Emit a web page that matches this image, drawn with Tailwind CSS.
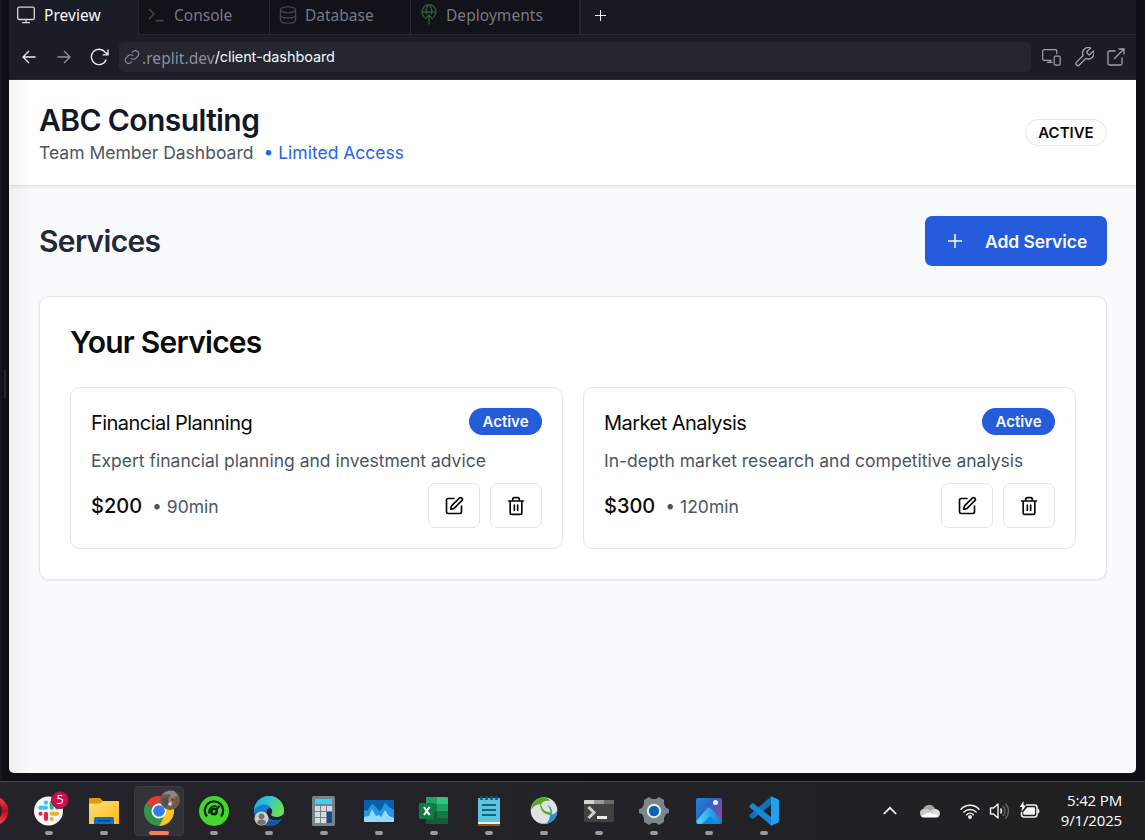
<!DOCTYPE html>
<html lang="en">
<head>
<meta charset="utf-8">
<title>ABC Consulting</title>
<script src="https://cdn.jsdelivr.net/npm/@tailwindcss/browser@4"></script>
</head>
<body class="w-[1145px] h-[840px] overflow-hidden bg-[#0e0e15] flex flex-col font-['Inter',sans-serif]">

<div class="flex h-[781px] shrink-0">
  <!-- left gutter with resize handle -->
  <div class="w-[9px] shrink-0 flex items-center justify-end pr-[3px] pb-[14px] border-l-2 border-[#171720]"><div class="w-[2px] h-[30px] bg-[#25252e]"></div></div>

  <div class="w-[1127px] h-[773px] shrink-0 flex flex-col bg-[#1b1d26]">
    <!-- tabs -->
    <div class="flex h-[35px] shrink-0 font-['Noto_Sans',sans-serif] text-[15.5px] text-[#777a83]">
      <div class="w-[129px] flex items-start pl-[8px] text-[#f5f7fa]">
        <svg class="mt-[6px] w-[18px] h-[18px]" viewBox="0 0 18 18" fill="none" stroke="#d5d8df" stroke-width="1.3"><rect x=".7" y="1.2" width="16.6" height="12.3" rx="1.5"/><path d="M9 13.5v3M5 16.6h8"/></svg>
        <span class="ml-[9px] mt-[3px] leading-[24px] tracking-[0.050px]">Preview</span>
      </div>
      <div class="w-[132px] flex items-start bg-[#11121a] border-x border-b border-[#242630] pl-[9px]">
        <svg class="mt-[8px] w-[16px] h-[14px]" viewBox="0 0 16 14" fill="none" stroke="#4d4739" stroke-width="1.4"><path d="M1 1l5 5-5 5M7.5 12.8h8"/></svg>
        <span class="ml-[10px] mt-[3px] leading-[24px]">Console</span>
      </div>
      <div class="w-[141px] flex items-start bg-[#11121a] border-r border-b border-[#242630] pl-[9px]">
        <svg class="mt-[6px] w-[18px] h-[18px]" viewBox="0 0 18 18" fill="none" stroke="#394757" stroke-width="1.3"><ellipse cx="9" cy="3.8" rx="7.6" ry="3"/><path d="M1.4 3.8v10.4c0 1.7 3.4 3 7.6 3s7.6-1.3 7.6-3V3.8M1.4 9c0 1.7 3.4 3 7.6 3s7.6-1.3 7.6-3"/></svg>
        <span class="ml-[8px] mt-[3px] leading-[24px]">Database</span>
      </div>
      <div class="w-[170px] flex items-start bg-[#11121a] border-r-2 border-b border-[#242630] pl-[10px]">
        <svg class="mt-[4px] w-[16px] h-[21px]" viewBox="0 0 16 21" fill="none" stroke="#2c5b39" stroke-width="1.4"><path d="M3.600 13.200a7 7 0 1 1 8.800 0M1 8h14M5.600 10.200C4.400 5.800 6 2.300 8 1.200c2 1.100 3.600 4.600 2.400 9M8 20.500V11M4 15l4-4 4 4"/></svg>
        <span class="ml-[9px] mt-[3px] leading-[24px] tracking-[0.050px]">Deployments</span>
      </div>
      <div class="flex-1 bg-[#181820] border-b border-[#292b34] pl-[14px] pt-[10px]">
        <svg class="w-[11px] h-[11px]" viewBox="0 0 11 11" stroke="#f2f4f7" stroke-width="1"><path d="M5.500 0v11M0 5.500h11"/></svg>
      </div>
    </div>

    <!-- address bar -->
    <div class="flex items-center h-[45px] shrink-0 border-b border-[#2a2c36] pl-[13px] pr-[11px]">
      <svg class="w-[14px] h-[14px]" viewBox="0 0 14 14" fill="none" stroke="#eceef2" stroke-width="1.3"><path d="M13.500 7H1M7 1L1 7l6 6"/></svg>
      <svg class="ml-[21px] w-[14px] h-[14px]" viewBox="0 0 14 14" fill="none" stroke="#8f929c" stroke-width="1.3"><path d="M.5 7H13M7 1l6 6-6 6"/></svg>
      <svg class="ml-[19px] w-[19px] h-[18px]" viewBox="0 0 19 18" fill="none" stroke="#eceef2" stroke-width="1.400"><path d="M16.300 11.500A7.700 7.700 0 1 1 15 4L18 6.800M18 1.500v5.400h-5.400"/></svg>
      <div class="ml-[10px] w-[912px] h-[30px] rounded-[5px] bg-[#242730] flex items-center pl-[5px] text-[#8b8f9a] font-['Noto_Sans',sans-serif] text-[15.500px]">
        <svg class="w-[16px] h-[16px] shrink-0" viewBox="0 0 24 24" fill="none" stroke="#8b8f9a" stroke-width="1.700"><path d="M10 13.500a5 5 0 0 0 7.500.5l3.500-3.500a5 5 0 0 0-7-7l-2 2M14 10.500a5 5 0 0 0-7.500-.5L3 13.500a5 5 0 0 0 7 7l2-2"/></svg>
        <span class="ml-[2px] mt-[2px] leading-[20px] tracking-[0.050px]">.replit.dev</span><span class="-mt-px leading-[20px] tracking-[-0.100px] text-[#f5f7fa] font-['Inter',sans-serif] text-[14.500px]">/client-dashboard</span>
      </div>
      <svg class="ml-[11px] w-[19px] h-[17px]" viewBox="0 0 19 17" fill="none" stroke="#a1a4ad" stroke-width="1.200"><path d="M9.500 11.300H2.200A1.500 1.500 0 0 1 .7 9.800V2.200A1.500 1.500 0 0 1 2.200.7h11.100a1.500 1.500 0 0 1 1.500 1.500v3M8 11.300v2M5 13.400h5.500"/><rect x="12.200" y="7.200" width="6" height="9" rx="1.200"/></svg>
      <svg class="ml-[14px] w-[19px] h-[20px]" viewBox="2 2 20 20" fill="none" stroke="#a1a4ad" stroke-width="1.400" stroke-linejoin="round"><path d="M14.700 6.300a1 1 0 0 0 0 1.400l1.600 1.600a1 1 0 0 0 1.400 0l3.770-3.770a6 6 0 0 1-7.940 7.940l-6.910 6.910a2.120 2.120 0 0 1-3-3l6.910-6.910a6 6 0 0 1 7.940-7.940z"/></svg>
      <svg class="ml-[13px] w-[18px] h-[18px]" viewBox="0 0 18 18" fill="none" stroke="#a1a4ad" stroke-width="1.300"><path d="M8.500 3H2.500A1.500 1.500 0 0 0 1 4.500v11A1.500 1.500 0 0 0 2.500 17h11a1.500 1.500 0 0 0 1.500-1.500v-6M11.500 1H17v5.500M17 1L7 11"/></svg>
    </div>

    <!-- previewed page -->
    <div class="relative h-[693px] shrink-0 bg-[#f9fafc] rounded-b-[5px] overflow-hidden">
      <div class="flex h-[106px] items-center justify-between bg-white border-b border-[#e2e4e7] pl-[30px] pr-[29px] shadow-[0_1px_3px_rgba(0,0,0,0.08)]">
        <div class="h-[60px] -mt-[6px]">
          <h1 class="text-[30px] leading-[40px] font-semibold tracking-[-0.600px] text-[#111827]">ABC Consulting</h1>
          <p class="text-[17.500px] leading-[25px] text-[#4b5563]"><span>Team Member Dashboard</span><span class="ml-[10px] text-[#2563eb]">• Limited Access</span></p>
        </div>
        <span class="w-[82px] h-[27px] rounded-full border border-[#e5e5e5] text-[15px] leading-[25px] text-center font-semibold text-[#0a0a0a]">ACTIVE</span>
      </div>

      <div class="pl-[30px] pr-[29px] pt-[30px]">
        <div class="flex items-center justify-between h-[50px]">
          <h2 class="text-[30px] leading-[40px] font-semibold tracking-[-0.680px] text-[#1f2937]">Services</h2>
          <button class="w-[182px] h-[50px] rounded-[7px] bg-[#255cdb] text-[#f8fafc] flex items-center pl-[23px] text-[17.500px] font-semibold">
            <svg class="w-[14px] h-[14px]" viewBox="0 0 14 14" stroke="currentColor" stroke-width="1.500"><path d="M7 0v14M0 7h14"/></svg>
            <span class="ml-[23px] mt-[2px] tracking-[-0.080px] whitespace-nowrap">Add Service</span>
          </button>
        </div>

        <section class="mt-[30px] h-[284px] rounded-[10px] border border-[#e5e5e5] bg-white px-[30px] pt-[25px] shadow-[0_1px_2px_rgba(0,0,0,0.06)]">
          <h3 class="text-[30px] leading-[40px] font-semibold tracking-[-0.750px] text-[#0a0a0a]">Your Services</h3>
          <div class="mt-[25px] grid grid-cols-2 gap-[20px]">
            <article class="h-[162px] rounded-[10px] border border-[#e5e5e5] px-[20px] pt-[20px]">
              <div class="flex justify-between">
                <h4 class="text-[20px] leading-[30px] tracking-[-0.540px] text-[#0a0a0a]">Financial Planning</h4>
                <span class="w-[73px] h-[27px] rounded-full bg-[#255cdb] text-[#f8fafc] text-[15px] leading-[27px] text-center font-semibold">Active</span>
              </div>
              <p class="mt-[10px] text-[17.500px] leading-[25px] text-[#4b5563]">Expert financial planning and investment advice</p>
              <div class="mt-[10px] flex items-center h-[45px]">
                <span class="text-[20px] font-medium text-[#0a0a0a]">$200</span>
                <span class="ml-[10px] mt-[3px] text-[17.500px] text-[#4b5563]">• 90min</span>
                <button class="ml-auto w-[52px] h-[45px] rounded-[7px] border border-[#e5e5e5] grid place-items-center">
                  <svg class="w-[20px] h-[20px]" viewBox="0 0 24 24" fill="none" stroke="#0a0a0a" stroke-width="2" stroke-linecap="round" stroke-linejoin="round"><path d="M12 3H5a2 2 0 0 0-2 2v14a2 2 0 0 0 2 2h14a2 2 0 0 0 2-2v-7"/><path d="M18.375 2.625a1 1 0 0 1 3 3l-9.013 9.014a2 2 0 0 1-.853.505l-2.873.84a.5.5 0 0 1-.62-.62l.84-2.873a2 2 0 0 1 .506-.852z"/></svg>
                </button>
                <button class="ml-[10px] w-[52px] h-[45px] rounded-[7px] border border-[#e5e5e5] grid place-items-center">
                  <svg class="w-[20px] h-[20px]" viewBox="0 0 24 24" fill="none" stroke="#0a0a0a" stroke-width="2" stroke-linecap="round" stroke-linejoin="round"><path d="M3 6h18M19 6v14a2 2 0 0 1-2 2H7a2 2 0 0 1-2-2V6M8 6V4a2 2 0 0 1 2-2h4a2 2 0 0 1 2 2v2M10 11v6M14 11v6"/></svg>
                </button>
              </div>
            </article>
            <article class="h-[162px] rounded-[10px] border border-[#e5e5e5] px-[20px] pt-[20px]">
              <div class="flex justify-between">
                <h4 class="text-[20px] leading-[30px] tracking-[-0.540px] text-[#0a0a0a]">Market Analysis</h4>
                <span class="w-[73px] h-[27px] rounded-full bg-[#255cdb] text-[#f8fafc] text-[15px] leading-[27px] text-center font-semibold">Active</span>
              </div>
              <p class="mt-[10px] text-[17.500px] leading-[25px] text-[#4b5563]">In-depth market research and competitive analysis</p>
              <div class="mt-[10px] flex items-center h-[45px]">
                <span class="text-[20px] font-medium text-[#0a0a0a]">$300</span>
                <span class="ml-[10px] mt-[3px] text-[17.500px] text-[#4b5563]">• 120min</span>
                <button class="ml-auto w-[52px] h-[45px] rounded-[7px] border border-[#e5e5e5] grid place-items-center">
                  <svg class="w-[20px] h-[20px]" viewBox="0 0 24 24" fill="none" stroke="#0a0a0a" stroke-width="2" stroke-linecap="round" stroke-linejoin="round"><path d="M12 3H5a2 2 0 0 0-2 2v14a2 2 0 0 0 2 2h14a2 2 0 0 0 2-2v-7"/><path d="M18.375 2.625a1 1 0 0 1 3 3l-9.013 9.014a2 2 0 0 1-.853.505l-2.873.84a.5.5 0 0 1-.62-.62l.84-2.873a2 2 0 0 1 .506-.852z"/></svg>
                </button>
                <button class="ml-[10px] w-[52px] h-[45px] rounded-[7px] border border-[#e5e5e5] grid place-items-center">
                  <svg class="w-[20px] h-[20px]" viewBox="0 0 24 24" fill="none" stroke="#0a0a0a" stroke-width="2" stroke-linecap="round" stroke-linejoin="round"><path d="M3 6h18M19 6v14a2 2 0 0 1-2 2H7a2 2 0 0 1-2-2V6M8 6V4a2 2 0 0 1 2-2h4a2 2 0 0 1 2 2v2M10 11v6M14 11v6"/></svg>
                </button>
              </div>
            </article>
          </div>
        </section>
      </div>
      <div class="absolute inset-y-0 left-0 w-[24px] bg-linear-to-r from-black/4 to-transparent"></div>
    </div>
  </div>
</div>

<!-- taskbar -->
<div class="flex h-[59px] shrink-0 border-t border-[#45454a] bg-linear-to-r from-[#24232b] via-[#232227] to-[#202020]">
  <div class="flex -ml-[33.500px] shrink-0">
    <div class="w-[55px] pt-[14px] flex flex-col items-center">
      <svg class="w-[30px] h-[30px]" viewBox="0 0 30 30"><defs><linearGradient id="op" x2="0" y2="1"><stop stop-color="#f04a50"/><stop offset=".5" stop-color="#b50d18"/><stop offset="1" stop-color="#ff4b4b"/></linearGradient></defs><circle cx="15" cy="15" r="14.300" fill="url(#op)"/><ellipse cx="15" cy="15" rx="8" ry="9.500" fill="#24232b"/></svg>
    </div>
    <div class="relative w-[55px] pt-[14px] flex flex-col items-center">
      <svg class="w-[30px] h-[30px]" viewBox="0 0 30 30"><circle cx="14.500" cy="15" r="14.500" fill="#f7f7f7"/><g stroke-width="4" stroke-linecap="round"><path d="M12 6.600v.1M6.300 11.800H12" stroke="#36c5f0"/><path d="M17.700 6.500v5.300M23 11.800h.1" stroke="#2eb67d"/><path d="M17.700 17.800H23M17.700 23v.1" stroke="#ecb22e"/><path d="M12 17.800V23M6.500 17.800h.1" stroke="#e01e5a"/></g></svg>
      <span class="absolute left-[29.500px] top-[9px] w-[18px] h-[18px] rounded-full bg-[#c9124c] border border-[#7e1236] text-white text-[12.500px] leading-[16px] text-center font-['Open_Sans',sans-serif]">5</span>
      <i class="mt-[5px] w-[8px] h-[4px] rounded-full bg-[#99999c]"></i>
    </div>
    <div class="w-[55px] pt-[14px] flex flex-col items-center">
      <svg class="w-[30px] h-[30px]" viewBox="0 0 30 30"><defs><linearGradient id="fo" x2="1" y2="1"><stop stop-color="#ffe07a"/><stop offset="1" stop-color="#fbb916"/></linearGradient></defs><path d="M0 3q0-1 1-1h10l3 3v6H0z" fill="#dc9d08"/><path d="M0 7.500h10.500L14 5h16v23H0z" fill="url(#fo)"/><path d="M5 28v-5.500q0-1.500 1.500-1.500h17q1.500 0 1.500 1.500V28z" fill="#0b71c3"/><path d="M8.500 24.700h13" stroke="#07447e" stroke-width="1.200"/></svg>
      <i class="mt-[5px] w-[8px] h-[4px] rounded-full bg-[#99999c]"></i>
    </div>
    <div class="w-[55px] pt-[4px] flex flex-col items-center">
      <div class="relative w-[50px] h-[50px] rounded-[4px] bg-[#333239] border border-[#3b3a41] pt-[9px] flex flex-col items-center">
        <svg class="w-[30px] h-[30px]" viewBox="0 0 30 30"><path d="M15 15L2 7.500A15 15 0 0 1 28 7.500z" fill="#e53b30"/><path d="M15 15L2 7.500A15 15 0 0 0 15 30l7-11z" fill="#31964b"/><path d="M15 7.500h13A15 15 0 0 1 15 30l7-13z" fill="#fbc420"/><circle cx="15" cy="15" r="7.500" fill="#fff"/><circle cx="15" cy="15" r="5.800" fill="#347ce8"/></svg>
        <svg class="absolute left-[25px] top-[3px] w-[20px] h-[20px]" viewBox="0 0 20 20"><circle cx="10" cy="10" r="10" fill="#6f5b50"/><path d="M2 5Q8 0 14 1l4 5-5 1-4-3z" fill="#7e8d95"/><path d="M11 4l4 3-2 6-3 2-2-5z" fill="#a87a62"/><path d="M2 9l6-2 1 7-4 3z" fill="#49505a"/><path d="M9 12l3 1-1 3-3-1z" fill="#d8cfc9"/><path d="M11 8l3 1-1 3z" fill="#4b2e28"/></svg>
        <i class="mt-[5px] w-[20px] h-[4px] rounded-full bg-[#f0805f]"></i>
      </div>
    </div>
    <div class="w-[55px] pt-[14px] flex flex-col items-center">
      <svg class="w-[30px] h-[30px]" viewBox="0 0 30 30" fill="none" stroke="#08240b"><circle cx="15" cy="15" r="15" fill="#44d62c" stroke="none"/><path d="M8 20.500a9.200 9.200 0 1 1 14 0" stroke-width="2.200"/><path d="M10.300 17.500a5.600 5.600 0 0 1 7.500-7" stroke-width="1.600"/><circle cx="15" cy="15.500" r="2.700" stroke-width="2.600"/><path d="M16.500 14l4-4" stroke-width="2.200"/></svg>
      <i class="mt-[5px] w-[8px] h-[4px] rounded-full bg-[#99999c]"></i>
    </div>
    <div class="w-[55px] pt-[14px] flex flex-col items-center">
      <svg class="w-[30px] h-[30px]" viewBox="0 0 30 30"><defs><linearGradient id="e1" x2="1" y2=".4"><stop stop-color="#239fe0"/><stop offset=".5" stop-color="#35c2d4"/><stop offset="1" stop-color="#6de04d"/></linearGradient></defs><circle cx="15" cy="15" r="15" fill="#127fd6"/><path d="M11 16c-1 7 6 12 17 7-4 6-9 8-14 7-5-3-6-9-3-14z" fill="#1557a0"/><path d="M0 14.500A15 15 0 0 1 30 15c0 4-3 6-7 6-3 0-6-1-6-2 0-1 2-2 1-5C16 7 5 6 0 14.500z" fill="url(#e1)"/><path d="M12.500 16q0-4 4-4c2 2 2 4 .5 6.500 0 2 4 3 8 2.200q3-.7 4-2.200l1 1-2.500 3.500c-7 3-15 1-15-7z" fill="#23222a"/><circle cx="7.500" cy="22.500" r="7" fill="#cfccc9"/><circle cx="7.500" cy="20.300" r="2.900" fill="#77716e"/><path d="M3 27q0-3.500 4.500-3.500T12 27q-4.500 4-9 0z" fill="#77716e"/></svg>
      <i class="mt-[5px] w-[8px] h-[4px] rounded-full bg-[#99999c]"></i>
    </div>
    <div class="w-[55px] pt-[14px] flex flex-col items-center">
      <svg class="w-[30px] h-[30px]" viewBox="0 0 30 30"><rect x="3" width="23" height="30" rx="1.500" fill="#78828b"/><rect x="6" y="3" width="17" height="5" fill="#3fd0f4"/><path d="M6 10h5v5H6zM12 10h5v5h-5zM18 10h5v5h-5zM6 16h5v5H6zM12 16h5v5h-5zM6 22h5v5H6zM12 22h5v5h-5z" fill="#d5dbe0"/><path d="M18 16h5v11h-5z" fill="#154b8c"/></svg>
      <i class="mt-[5px] w-[8px] h-[4px] rounded-full bg-[#99999c]"></i>
    </div>
    <div class="w-[55px] pt-[14px] flex flex-col items-center">
      <svg class="w-[30px] h-[30px]" viewBox="0 0 30 30"><rect y="4" width="30" height="22" rx="1" fill="#0b5eac"/><path d="M0 14l3 1 5-7 3 2 4 5 2-1 4-7 4 4 5 3v11H0z" fill="#2299df"/><path d="M0 21l5-1 3-7 4 7 3-1 2 2 4-7 4 6 5 2v3q0 1-1 1H1q-1 0-1-1z" fill="#94dafa"/></svg>
      <i class="mt-[5px] w-[8px] h-[4px] rounded-full bg-[#99999c]"></i>
    </div>
    <div class="w-[55px] pt-[14px] flex flex-col items-center">
      <svg class="w-[30px] h-[30px]" viewBox="0 0 30 30"><path d="M7 1h11v7H7z" fill="#21a366"/><path d="M18 1h10q1 0 1 1v6H18z" fill="#33c481"/><path d="M7 8h11v7H7z" fill="#107c41"/><path d="M18 8h11v7H18z" fill="#21a366"/><path d="M7 15h11v7H7z" fill="#185c37"/><path d="M18 15h11v7H18z" fill="#107c41"/><path d="M7 22h22v6H8q-1 0-1-1z" fill="#185c37"/><rect y="7" width="15" height="16" rx="1" fill="#107c41"/><path d="M5 11l5.500 8M10.500 11L5 19" stroke="#fff" stroke-width="2.100"/></svg>
      <i class="mt-[5px] w-[8px] h-[4px] rounded-full bg-[#99999c]"></i>
    </div>
    <div class="w-[55px] pt-[14px] flex flex-col items-center">
      <svg class="w-[30px] h-[30px]" viewBox="0 0 30 30"><rect x="4" y="25" width="22" height="5" fill="#9b4b1c"/><rect x="4" y="24" width="22" height="4" fill="#e9eef0"/><rect x="4" y="2" width="22" height="24" rx="1" fill="#59c5de"/><path d="M8 9h14M8 14h14M8 19h14" stroke="#15637c" stroke-width="1.800"/><path d="M7.500 0v4M12.500 0v4M17.500 0v4M22.500 0v4" stroke="#17556c" stroke-width="2.600"/></svg>
      <i class="mt-[5px] w-[8px] h-[4px] rounded-full bg-[#99999c]"></i>
    </div>
    <div class="w-[55px] pt-[14px] flex flex-col items-center">
      <svg class="w-[30px] h-[30px]" viewBox="0 0 30 30"><circle cx="15" cy="14.500" r="13.300" fill="#dfe2e1"/><path d="M2 14C3 5 9 1 15 1.200c3 .3 5 2 6 4-4-1-7 0-9 3-4 0-8 2-10 5.800z" fill="#56a72b"/><path d="M12 8c1 6 5 9 11 8l-1 3c-6 0-11-4-11-11z" fill="#56a72b"/><path d="M18 9c4 1 6 5 5 10l-2 1c1-5 0-8-3-11z" fill="#55a5a0"/><path d="M28 15c0 6-4 12-11 12.800 3-3 4-6 4-9 3 0 5-1 7-3.800z" fill="#2c8fd0"/></svg>
      <i class="mt-[5px] w-[8px] h-[4px] rounded-full bg-[#99999c]"></i>
    </div>
    <div class="w-[55px] pt-[14px] flex flex-col items-center">
      <svg class="w-[30px] h-[30px]" viewBox="0 0 30 30"><rect y="4" width="30" height="22" rx="1.500" fill="#414141"/><path d="M0 8V5q0-1 1-1h9v4z" fill="#d2d2d2"/><path d="M10 4h10v4H10z" fill="#9b9b9b"/><path d="M20 4h9q1 0 1 1v3H20z" fill="#6a6a6a"/><path d="M4.500 11l5.500 5.500-5.500 5.500" fill="none" stroke="#d0d0d0" stroke-width="3"/><path d="M13 20h10v3H13z" fill="#ececec"/></svg>
      <i class="mt-[5px] w-[8px] h-[4px] rounded-full bg-[#99999c]"></i>
    </div>
    <div class="w-[55px] pt-[14px] flex flex-col items-center">
      <svg class="w-[30px] h-[30px]" viewBox="0 0 30 30"><path d="M10 1l3 2h4l3-2 5 3v4l2 4 3 1v4l-3 1-2 4v4l-5 3-3-2h-4l-3 2-5-3v-4l-2-4-3-1v-4l3-1 2-4V4z" fill="#7c848c"/><circle cx="15" cy="15" r="7.200" fill="#eef0f2"/><circle cx="15" cy="15" r="5.200" fill="#0c62b4"/></svg>
      <i class="mt-[5px] w-[8px] h-[4px] rounded-full bg-[#99999c]"></i>
    </div>
    <div class="w-[55px] pt-[14px] flex flex-col items-center">
      <svg class="w-[30px] h-[30px]" viewBox="0 0 30 30"><defs><linearGradient id="ph" x2="1" y2=".6"><stop stop-color="#1b83dc"/><stop offset=".5" stop-color="#3464c4"/><stop offset="1" stop-color="#8b48a0"/></linearGradient><linearGradient id="p2" x2="1"><stop stop-color="#50dcff"/><stop offset="1" stop-color="#1377d2"/></linearGradient></defs><rect x="2" y="2" width="26" height="26" rx="2" fill="url(#ph)"/><path d="M2.500 25l10.500-12.500q2-2 4 0l11 12q0 3.500-2 3.500H4q-1.500-.5-1.500-3z" fill="url(#p2)"/><path d="M8 28l7-7q1-1 2 0l7 7z" fill="#1085dc"/><circle cx="21.500" cy="6.500" r="2.500" fill="#f1f3ff"/></svg>
      <i class="mt-[5px] w-[8px] h-[4px] rounded-full bg-[#99999c]"></i>
    </div>
    <div class="w-[55px] pt-[14px] flex flex-col items-center">
      <svg class="w-[30px] h-[30px]" viewBox="0 0 30 30"><path d="M.6 20.500l2 2q1 .7 2 0L22 9V.5L1 18.500q-.8 1-.4 2z" fill="#0e72b8"/><path d="M.6 9.500l2-2q1-.7 2 0L22 21v8.500L1 11.500q-.8-1-.4-2z" fill="#1687d3"/><path d="M22 .2l7 3q1 .6 1 1.500v20.600q0 .9-1 1.500l-7 3z" fill="#25a0ee"/></svg>
      <i class="mt-[5px] w-[8px] h-[4px] rounded-full bg-[#99999c]"></i>
    </div>
  </div>

  <!-- system tray -->
  <div class="ml-auto flex h-[58px] items-center pr-[23px]">
    <svg class="w-[14px] h-[9px] -mt-px" viewBox="0 0 14 9" fill="none" stroke="#f4f4f4" stroke-width="1.700"><path d="M.8 8L7 1.800 13.200 8"/></svg>
    <svg class="ml-[23px] w-[20px] h-[14px] -mt-px" viewBox="0 0 20 14"><path d="M3 8a6.200 6.200 0 0 1 12-3l-4 5z" fill="#a6a6a6"/><path d="M4 5q4-1 8 3l-8 5a4 4 0 0 1 0-8z" fill="#c6c6c6"/><path d="M11 7q2-3 5-2 4 1 4 4.500t-4 3.500z" fill="#ddd"/><path d="M1 12l9-4 9 4q-1 1.500-3 1.500H4Q2 13.500 1 12z" fill="#fff"/></svg>
    <svg class="ml-[20px] w-[20px] h-[16px] -mt-px" viewBox="0 0 20 16" fill="none" stroke="#f4f4f4" stroke-width="1.500" stroke-linecap="round"><path d="M1 6.200a12.500 12.500 0 0 1 18 0M3.900 9a8.500 8.500 0 0 1 12.200 0M6.700 11.700a4.700 4.700 0 0 1 6.600 0"/><circle cx="10" cy="14" r="1.200" fill="#f4f4f4"/></svg>
    <svg class="ml-[9px] w-[21px] h-[18px]" viewBox="0 0 21 18" fill="none" stroke="#f4f4f4" stroke-width="1.400"><path d="M1.500 6v6h3l4.500 4V2L4.500 6z" stroke-linejoin="round"/><path d="M11.500 6.500q2 2.500 0 5"/><path d="M14 4q4 5 0 10M16.500 1.500q6 7.500 0 15" stroke="#68686a"/></svg>
    <svg class="ml-[9px] w-[21px] h-[18px] -mt-[3px]" viewBox="0 0 21 18"><path d="M7 4h8.500Q18 4 18 6.500v7q0 2.500-2.500 2.500H5q-2.500 0-2.500-2.500V11" fill="none" stroke="#f4f4f4" stroke-width="1.500"/><path d="M8.500 6.300H15q1 0 1 1v5.500q0 1-1 1H5q-.8 0-.8-1V11z" fill="#f4f4f4"/><path d="M18.500 7.500q2 0 2 2.500t-2 2.500z" fill="#f4f4f4"/><path d="M4.500 0L.8 6h2.500l-1 5L7 4.500H4.500z" fill="#fff"/></svg>
    <div class="ml-[19px] -mt-[2px] w-[63px] text-right text-white text-[15px] leading-[20px] tracking-[-0.150px] whitespace-nowrap flex flex-col items-end font-['Open_Sans',sans-serif]"><span>5:42 PM</span><span>9/1/2025</span></div>
  </div>
</div>
</body>
</html>
